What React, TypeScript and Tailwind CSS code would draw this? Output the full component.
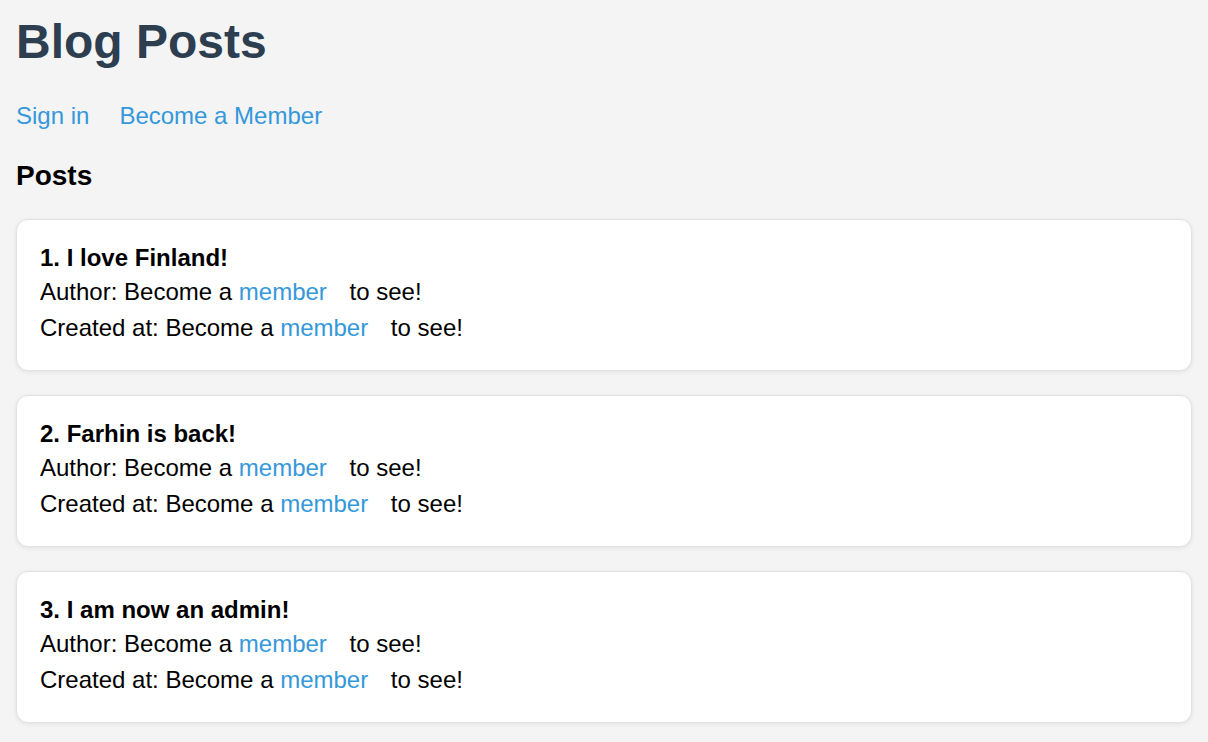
const posts = [
  { id: 1, title: "I love Finland!" },
  { id: 2, title: "Farhin is back!" },
  { id: 3, title: "I am now an admin!" },
];

function Hidden({ label }: { label: string }) {
  return (
    <div className="h-[36px] leading-[36px] text-[24px] text-black">
      {label}: Become a{" "}
      <a href="#" className="mr-[16px] text-[#3498db]">
        member
      </a>{" "}
      to see!
    </div>
  );
}

export default function App() {
  return (
    <div
      className="min-h-screen bg-[#f4f4f4] px-[16px] pb-[16px]"
      style={{ fontFamily: '"Liberation Sans", Arial, sans-serif' }}
    >
      <h1 className="pt-[15px] h-[69px] leading-[54px] text-[48px] font-bold text-[#2c3e50]">
        Blog Posts
      </h1>
      <nav className="mt-[29px] flex gap-[30px] h-[36px] leading-[36px] text-[24px] text-[#3498db]">
        <a href="#">Sign in</a>
        <a href="#">Become a Member</a>
      </nav>
      <h2 className="mt-[26px] h-[32px] leading-[32px] text-[28px] font-bold text-black">Posts</h2>
      <div className="mt-[27px] flex flex-col gap-[24px]">
        {posts.map((p) => (
          <div
            key={p.id}
            className="rounded-[12px] border border-[#e2e2e2] bg-white px-[23px] pt-[25px] pb-[24px] shadow-[0_1px_4px_rgba(0,0,0,0.08)]"
          >
            <h3 className="h-[26px] leading-[26px] text-[24px] font-bold text-black">
              {p.id}. {p.title}
            </h3>
            <div className="mt-[3px]">
              <Hidden label="Author" />
              <Hidden label="Created at" />
            </div>
          </div>
        ))}
      </div>
    </div>
  );
}
